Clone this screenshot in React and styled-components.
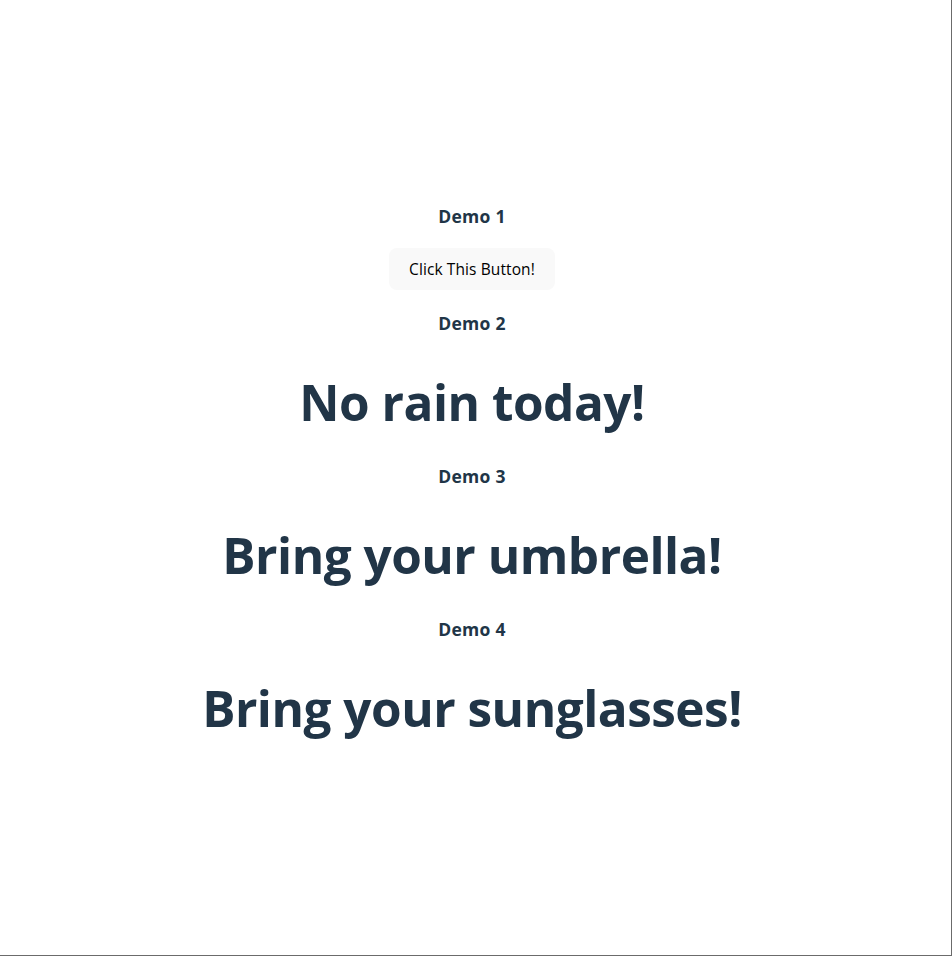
import React from "react";
import styled, { createGlobalStyle } from "styled-components";

const GlobalStyle = createGlobalStyle`
  html, body {
    margin: 0;
    padding: 0;
    background: #ffffff;
  }
  body {
    font-family: "Open Sans", "Noto Sans", "Liberation Sans", sans-serif;
    color: #213547;
    -webkit-font-smoothing: antialiased;
  }
  * { box-sizing: border-box; }
`;

const Page = styled.div`
  height: 100vh;
  border-right: 1px solid #6b6b6b;
  border-bottom: 1px solid #6b6b6b;
  display: flex;
  flex-direction: column;
  align-items: center;
  padding: 204px 7px 0 0;
  text-align: center;
`;

const Label = styled.h3`
  margin: 0;
  font-size: 17.5px;
  line-height: 24px;
  letter-spacing: 0.3px;
  font-weight: 700;
  color: #213547;
`;

const DemoButton = styled.button`
  margin: 20px 0 21px;
  height: 42px;
  padding: 0 19px;
  border: 1px solid transparent;
  border-radius: 8px;
  background: #f9f9f9;
  color: #000000;
  font-family: inherit;
  font-size: 15.5px;
  letter-spacing: 0.1px;
  font-weight: 500;
  cursor: pointer;
`;

const Headline = styled.h1`
  margin: 39px 0 34px;
  font-size: 49.5px;
  line-height: 56px;
  letter-spacing: -0.5px;
  font-weight: 700;
  color: #213547;
`;

const demos = [
  { label: "Demo 2", text: "No rain today!" },
  { label: "Demo 3", text: "Bring your umbrella!" },
  { label: "Demo 4", text: "Bring your sunglasses!" },
];

export default function App() {
  return (
    <>
      <GlobalStyle />
      <Page>
        <Label>Demo 1</Label>
        <DemoButton>Click This Button!</DemoButton>
        {demos.map((d) => (
          <React.Fragment key={d.label}>
            <Label>{d.label}</Label>
            <Headline>{d.text}</Headline>
          </React.Fragment>
        ))}
      </Page>
    </>
  );
}
